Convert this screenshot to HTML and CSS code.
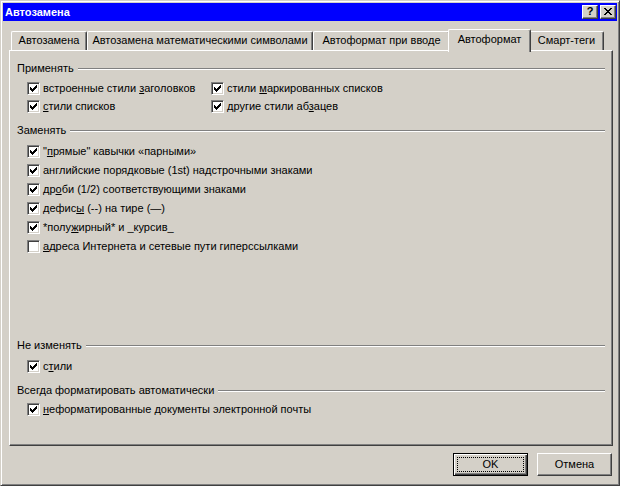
FILE: index.html
```html
<!DOCTYPE html>
<html lang="ru">
<head>
<meta charset="utf-8">
<title>Автозамена</title>
<link rel="stylesheet" href="styles.css">
</head>
<body>
<div class="window">
  <div class="titlebar">
    <span class="title">Автозамена</span>
    <div class="caption-buttons">
      <span class="capbtn help">?</span>
      <span class="capbtn close"><svg width="8" height="7" viewBox="0 0 8 7" shape-rendering="crispEdges"><path d="M0 0h2v1H0zM6 0h2v1H6zM1 1h2v1H1zM5 1h2v1H5zM2 2h4v1H2zM3 3h2v1H3zM2 4h4v1H2zM1 5h2v1H1zM5 5h2v1H5zM0 6h2v1H0zM6 6h2v1H6z"/></svg></span>
    </div>
  </div>
  <div class="body">
    <div class="tabs">
      <div class="tab t1">Автозамена</div>
      <div class="tab t2">Автозамена математическими символами</div>
      <div class="tab t3">Автоформат при вводе</div>
      <div class="tab t4 active">Автоформат</div>
      <div class="tab t5">Смарт-теги</div>
    </div>
    <div class="panel">
      <div class="group-title g1">Применять</div>
      <div class="grid2">
        <div class="opt"><span class="cb"><svg width="9" height="9" viewBox="0 0 9 9" shape-rendering="crispEdges"><path d="M1 3h1v3H1zM2 4h1v3H2zM3 5h1v3H3zM4 4h1v3H4zM5 3h1v3H5zM6 2h1v3H6zM7 1h1v3H7z"/></svg></span><span class="lbl">встроенные стили <u>з</u>аголовков</span></div>
        <div class="opt"><span class="cb"><svg width="9" height="9" viewBox="0 0 9 9" shape-rendering="crispEdges"><path d="M1 3h1v3H1zM2 4h1v3H2zM3 5h1v3H3zM4 4h1v3H4zM5 3h1v3H5zM6 2h1v3H6zM7 1h1v3H7z"/></svg></span><span class="lbl">стили <u>м</u>аркированных списков</span></div>
        <div class="opt"><span class="cb"><svg width="9" height="9" viewBox="0 0 9 9" shape-rendering="crispEdges"><path d="M1 3h1v3H1zM2 4h1v3H2zM3 5h1v3H3zM4 4h1v3H4zM5 3h1v3H5zM6 2h1v3H6zM7 1h1v3H7z"/></svg></span><span class="lbl"><u>с</u>тили списков</span></div>
        <div class="opt"><span class="cb"><svg width="9" height="9" viewBox="0 0 9 9" shape-rendering="crispEdges"><path d="M1 3h1v3H1zM2 4h1v3H2zM3 5h1v3H3zM4 4h1v3H4zM5 3h1v3H5zM6 2h1v3H6zM7 1h1v3H7z"/></svg></span><span class="lbl">другие стили аб<u>з</u>ацев</span></div>
      </div>

      <div class="group-title g2">Заменять</div>
      <div class="list">
        <div class="opt tall"><span class="cb"><svg width="9" height="9" viewBox="0 0 9 9" shape-rendering="crispEdges"><path d="M1 3h1v3H1zM2 4h1v3H2zM3 5h1v3H3zM4 4h1v3H4zM5 3h1v3H5zM6 2h1v3H6zM7 1h1v3H7z"/></svg></span><span class="lbl">"<u>п</u>рямые" кавычки «парными»</span></div>
        <div class="opt tall"><span class="cb"><svg width="9" height="9" viewBox="0 0 9 9" shape-rendering="crispEdges"><path d="M1 3h1v3H1zM2 4h1v3H2zM3 5h1v3H3zM4 4h1v3H4zM5 3h1v3H5zM6 2h1v3H6zM7 1h1v3H7z"/></svg></span><span class="lbl">английские поря<u>д</u>ковые (1st) надстрочными знаками</span></div>
        <div class="opt tall"><span class="cb"><svg width="9" height="9" viewBox="0 0 9 9" shape-rendering="crispEdges"><path d="M1 3h1v3H1zM2 4h1v3H2zM3 5h1v3H3zM4 4h1v3H4zM5 3h1v3H5zM6 2h1v3H6zM7 1h1v3H7z"/></svg></span><span class="lbl">др<u>о</u>би (1/2) соответствующими знаками</span></div>
        <div class="opt tall"><span class="cb"><svg width="9" height="9" viewBox="0 0 9 9" shape-rendering="crispEdges"><path d="M1 3h1v3H1zM2 4h1v3H2zM3 5h1v3H3zM4 4h1v3H4zM5 3h1v3H5zM6 2h1v3H6zM7 1h1v3H7z"/></svg></span><span class="lbl">дефис<u>ы</u> (--) на тире (—)</span></div>
        <div class="opt tall"><span class="cb"><svg width="9" height="9" viewBox="0 0 9 9" shape-rendering="crispEdges"><path d="M1 3h1v3H1zM2 4h1v3H2zM3 5h1v3H3zM4 4h1v3H4zM5 3h1v3H5zM6 2h1v3H6zM7 1h1v3H7z"/></svg></span><span class="lbl">*полу<u>ж</u>ирный* и _курсив_</span></div>
        <div class="opt tall"><span class="cb"></span><span class="lbl"><u>а</u>дреса Интернета и сетевые пути гиперссылками</span></div>
      </div>

      <div class="group-title g3">Не изменять</div>
      <div class="list l3">
        <div class="opt"><span class="cb"><svg width="9" height="9" viewBox="0 0 9 9" shape-rendering="crispEdges"><path d="M1 3h1v3H1zM2 4h1v3H2zM3 5h1v3H3zM4 4h1v3H4zM5 3h1v3H5zM6 2h1v3H6zM7 1h1v3H7z"/></svg></span><span class="lbl">с<u>т</u>или</span></div>
      </div>

      <div class="group-title g4">Всегда форматировать автоматически</div>
      <div class="list l4">
        <div class="opt"><span class="cb"><svg width="9" height="9" viewBox="0 0 9 9" shape-rendering="crispEdges"><path d="M1 3h1v3H1zM2 4h1v3H2zM3 5h1v3H3zM4 4h1v3H4zM5 3h1v3H5zM6 2h1v3H6zM7 1h1v3H7z"/></svg></span><span class="lbl"><u>н</u>еформатированные документы электронной почты</span></div>
      </div>
    </div>
    <div class="buttons">
      <button class="btn default"><span class="focus">OK</span></button>
      <button class="btn">Отмена</button>
    </div>
  </div>
</div>
</body>
</html>
```
FILE: styles.css
```css
html, body {
  margin: 0;
  padding: 0;
  background: #d4d0c8;
}

body {
  font-family: "Liberation Sans", Arial, sans-serif;
  font-size: 11px;
  line-height: 13px;
  color: #000;
}

.window {
  width: 620px;
  height: 486px;
  box-sizing: border-box;
  background: #d4d0c8;
  border: 1px solid;
  border-color: #d4d0c8 #404040 #404040 #d4d0c8;
  box-shadow: inset 1px 1px #fff, inset -1px -1px #808080;
  padding: 2px;
}

/* ---------- title bar ---------- */
.titlebar {
  height: 18px;
  background: #0000ff;
  display: flex;
  align-items: center;
  justify-content: space-between;
  padding: 0 1px 0 2px;
}

.title {
  color: #fff;
  font-weight: bold;
  font-size: 11px;
}

.caption-buttons {
  display: flex;
  gap: 2px;
}

.capbtn {
  width: 16px;
  height: 14px;
  box-sizing: border-box;
  background: #d4d0c8;
  border: 1px solid;
  border-color: #fff #404040 #404040 #fff;
  box-shadow: inset -1px -1px #808080;
  display: flex;
  align-items: center;
  justify-content: center;
}

.help {
  font-weight: bold;
  font-size: 11px;
  line-height: 11px;
  padding-bottom: 1px;
}

.close svg {
  display: block;
  margin: 0 1px 1px 0;
}

/* ---------- body ---------- */
.body {
  padding: 8px 4px 0 6px;
}

.tabs {
  display: flex;
  align-items: flex-end;
  padding-left: 2px;
  height: 21px;
}

.tab {
  height: 19px;
  box-sizing: border-box;
  border: 1px solid;
  border-bottom: none;
  border-color: #fff #404040 #fff #fff;
  border-radius: 2px 2px 0 0;
  box-shadow: inset -1px 0 #808080;
  display: flex;
  align-items: center;
  justify-content: center;
  white-space: nowrap;
  padding-bottom: 1px;
}

.t1 { width: 76px; }
.t2 { width: 226px; }
.t3 { width: 137px; }
.t4 { width: 79px; }
.t5 { width: 75px; }

.tab.active {
  position: relative;
  z-index: 1;
  width: 83px;
  height: 23px;
  margin: 0 -2px -2px -2px;
  background: #d4d0c8;
  padding-bottom: 4px;
}

.panel {
  height: 396px;
  box-sizing: border-box;
  border: 1px solid;
  border-color: #fff #404040 #404040 #fff;
  box-shadow: inset -1px -1px #808080;
  padding: 11px 7px 0 7px;
}

.group-title {
  display: flex;
  align-items: center;
  gap: 4px;
  height: 13px;
  white-space: nowrap;
}

.group-title::after {
  content: "";
  flex: 1;
  height: 0;
  border-top: 1px solid #808080;
  border-bottom: 1px solid #fff;
}

.g2 { margin-top: 8px; }
.g3 { margin-top: 82px; }
.g4 { margin-top: 8px; }

.grid2 {
  display: grid;
  grid-template-columns: 184px 1fr;
  margin-top: 5px;
  padding-left: 10px;
}

.list {
  padding-left: 10px;
  margin-top: 6px;
}

.l3 { margin-top: 6px; }
.l4 { margin-top: 4px; }

.opt {
  display: flex;
  align-items: flex-start;
  height: 18px;
  gap: 3px;
  white-space: nowrap;
}

.opt.tall { height: 19px; }

.cb {
  margin-top: 2px;
  width: 13px;
  height: 13px;
  box-sizing: border-box;
  background: #fff;
  border: 1px solid;
  border-color: #808080 #fff #fff #808080;
  box-shadow: inset 1px 1px #404040, inset -1px -1px #d4d0c8;
  padding: 1px;
  flex: none;
}

.cb svg {
  display: block;
}

.lbl {
  margin-top: 2px;
  line-height: 13px;
}

.lbl u {
  text-decoration: underline;
  text-underline-offset: 1px;
}

/* ---------- buttons ---------- */
.buttons {
  display: flex;
  justify-content: flex-end;
  gap: 9px;
  margin-top: 7px;
  padding-right: 1px;
}

.btn {
  width: 75px;
  height: 23px;
  box-sizing: border-box;
  margin: 0;
  padding: 0;
  font: inherit;
  color: #000;
  background: #d4d0c8;
  border: 1px solid;
  border-color: #fff #404040 #404040 #fff;
  box-shadow: inset -1px -1px #808080;
  display: flex;
  align-items: center;
  justify-content: center;
}

.btn.default {
  border: 1px solid #000;
  box-shadow: inset 1px 1px #fff, inset -1px -1px #404040, inset -2px -2px #808080;
  padding: 3px;
}

.focus {
  flex: 1;
  align-self: stretch;
  border: 1px dotted #000;
  display: flex;
  align-items: center;
  justify-content: center;
}
```
